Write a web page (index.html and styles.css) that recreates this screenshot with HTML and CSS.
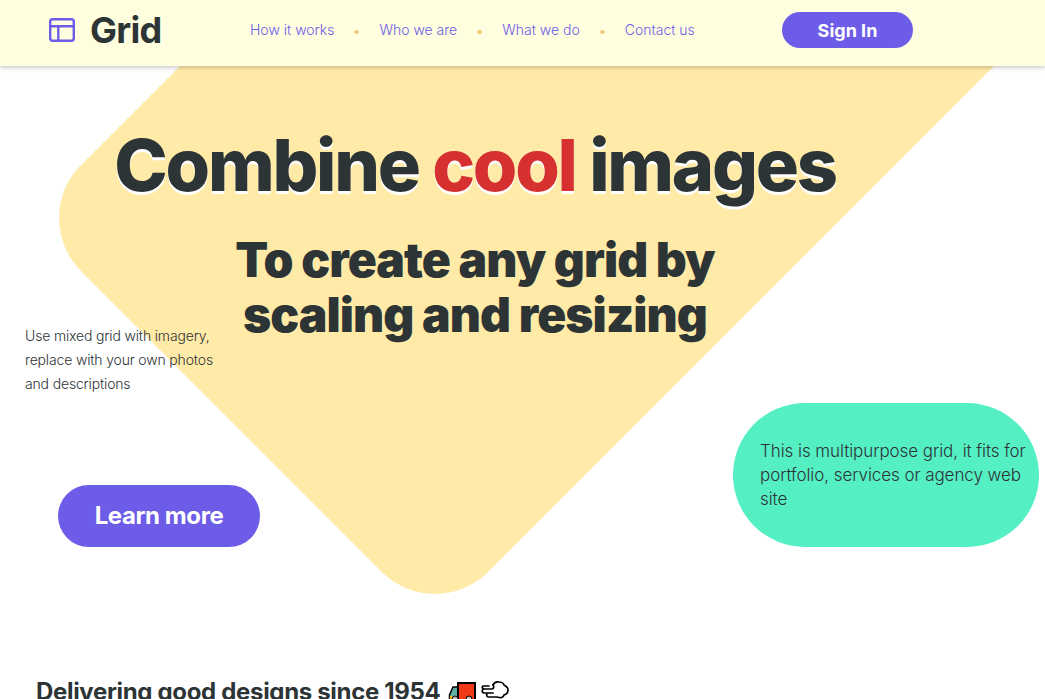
FILE: index.html
```html
<!DOCTYPE html>
<html lang="en">
<head>
<meta charset="utf-8">
<title>Grid</title>
<link rel="stylesheet" href="styles.css">
</head>
<body>
<header class="header">
  <div class="brand">
    <svg class="brand-icon" viewBox="0 0 26 24"><g fill="none" stroke="#6c5ce7" stroke-width="2.400"><rect x="1.200" y="1.200" width="23.600" height="21.600" rx="2.500"/><path d="M1 8.300H25M9.300 8.300V23"/></g></svg>
    <span class="brand-name">Grid</span>
  </div>
  <nav class="nav">
    <a class="nav-link">How it works</a><i class="dot"></i>
    <a class="nav-link">Who we are</a><i class="dot"></i>
    <a class="nav-link">What we do</a><i class="dot"></i>
    <a class="nav-link">Contact us</a>
  </nav>
  <button class="button sign-in">Sign In</button>
</header>
<main>
  <section class="hero">
    <svg class="hero-shape" viewBox="0 0 1045 640"><path fill="#ffeaa7" d="M182 -2L81 99A75 75 0 0 0 81 205L382 506A75 75 0 0 0 488 506L996 -2Z"/></svg>
    <h1 class="title">Combine <span class="accent">cool</span> images</h1>
    <h2 class="subtitle">To create any grid by<br>scaling and resizing</h2>
    <p class="lead">Use mixed grid with imagery,<br>replace with your own photos<br>and descriptions</p>
    <div class="hero-row">
      <button class="button learn-more">Learn more</button>
      <p class="note">This is multipurpose grid, it fits for<br>portfolio, services or agency web<br>site</p>
    </div>
  </section>
  <h3 class="section-title"><span>Delivering good designs since 1954</span>
    <svg class="emoji" viewBox="0 0 62 28"><path d="M1.500 20V13L5 5H11V20Z" fill="#61b2a5" stroke="#000" stroke-width="1.500"/><path d="M2 14h9v7H2z" fill="#fcc21b"/><path d="M10 1H27V21H10Z" fill="#f03a17" stroke="#000" stroke-width="2"/><circle cx="7" cy="17" r="3" fill="#bbb" stroke="#000"/><circle cx="21" cy="17" r="3" fill="#bbb" stroke="#000"/><g fill="none" stroke="#000" stroke-width="1.700" stroke-linecap="round"><path d="M45 3Q47 -1 51 0Q55 0 56 3Q60 5 60 8Q60 12 56 13Q55 17 49 15H40Q38 14 39 12"/><path d="M45 3Q47 6 44 7H36Q33 6 35 4H41M35 7Q33 10 36 11H45"/></g></svg>
  </h3>
</main>
</body>
</html>
```
FILE: styles.css
```css
* { box-sizing: border-box; }
body { margin: 0; height: 699px; overflow: hidden; background: #fff; color: #2d3436; font-family: Inter, sans-serif; }
h1, h2, h3, p { margin: 0; }
.header { position: relative; z-index: 1; display: flex; height: 66px; padding-left: 49px; background: #ffffe0; box-shadow: 0 1px 5px rgba(0, 0, 0, .27); }
.brand { display: flex; width: 201px; height: 60px; align-items: center; gap: 15px; }
.brand-icon { width: 26px; height: 24px; }
.brand-name { font-size: 36px; font-weight: 700; letter-spacing: -.7px; }
.nav { display: flex; width: 532px; height: 60px; padding-bottom: 1px; align-items: center; gap: 20px; }
.nav-link { color: #6c5ce7; font-size: 14px; font-weight: 300; white-space: nowrap; }
.dot { width: 5px; height: 4px; margin-top: 4px; border-radius: 50%; background: #efcb71; }
.button { border: 0; padding: 0; border-radius: 40px; background: #6c5ce7; color: #fff; font-family: inherit; font-weight: 700; }
.sign-in { width: 131px; height: 36px; margin-top: 12px; font-size: 18px; }
.hero { position: relative; height: 607px; padding-top: 55px; }
.hero-shape { position: absolute; inset: 0; z-index: -1; width: 1045px; height: 640px; }
.title { width: 950px; text-align: center; font-size: 72px; line-height: 87px; font-weight: 800; letter-spacing: -2.25px; text-shadow: 0 3px 0 #fff; }
.accent { color: #d63031; }
.subtitle { width: 950px; margin-top: 24px; text-align: center; font-size: 48px; line-height: 55px; font-weight: 900; letter-spacing: -.93px; }
.lead { margin-top: -18px; padding-left: 25px; font-size: 14px; line-height: 24px; font-weight: 300; letter-spacing: -.16px; }
.hero-row { display: flex; justify-content: space-between; align-items: flex-end; margin-top: 7px; padding: 0 6px 0 58px; }
.learn-more { width: 202px; height: 62px; padding-bottom: 2px; font-size: 24px; letter-spacing: -.4px; }
.note { width: 306px; height: 144px; padding: 36px 0 0 27px; border-radius: 72px; background: #55efc4; font-size: 17px; line-height: 24px; font-weight: 300; letter-spacing: -.07px; white-space: nowrap; }
.section-title { display: flex; gap: 8px; padding: 4px 0 0 36px; font-size: 24px; line-height: 29px; font-weight: 700; letter-spacing: -.33px; }
.emoji { width: 62px; height: 28px; margin-top: 5px; overflow: visible; }
```
